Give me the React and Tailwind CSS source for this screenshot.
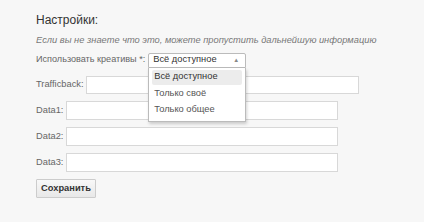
export default function App() {
  const font = { fontFamily: '"Liberation Sans", Arial, sans-serif' };

  return (
    <div className="w-[424px] h-[222px] bg-[#f7f7f7] overflow-hidden" style={font}>
      <div className="pl-[36px] pt-[12px]">
        <h2 className="text-[12px] leading-[16px] text-[#333]">Настройки:</h2>

        <p className="mt-[5px] text-[9.3px] leading-[14px] italic text-[#777]">
          Если вы не знаете что это, можете пропустить дальнейшую информацию
        </p>

        {/* creatives select */}
        <div className="mt-[6px] flex items-center h-[14px] text-[9.1px] text-[#666]">
          <span>Использовать креативы *:</span>
          <div className="relative ml-[3px] z-10 text-[9.3px]">
            <div className="w-[98px] h-[15px] border border-[#bbb] bg-white rounded-t-[2px] flex items-center justify-between pl-[4px] pr-[6px] text-[#333]">
              <span>Всё доступное</span>
              <span className="text-[6px] text-[#888]">▲</span>
            </div>
            <div className="absolute left-0 top-[15px] w-[98px] bg-white border border-t-0 border-[#bbb] shadow-[1px_2px_3px_rgba(0,0,0,0.18)] px-[3px] pt-[2px] pb-[3px] text-[#555]">
              <div className="h-[15px] flex items-center pl-[2px] bg-[#ececec] rounded-[2px] text-[#333]">Всё доступное</div>
              <div className="h-[16px] mt-[1px] flex items-center pl-[2px]">Только своё</div>
              <div className="h-[16px] flex items-center pl-[2px]">Только общее</div>
            </div>
          </div>
        </div>

        {/* trafficback */}
        <div className="mt-[9px] flex items-center text-[9.3px] text-[#666]">
          <span>Trafficback:</span>
          <div className="ml-[2px] w-[273px] h-[18px] bg-white border border-[#d8d8d8]" />
        </div>

        {["Data1:", "Data2:", "Data3:"].map((l) => (
          <div key={l} className="mt-[7px] flex items-center text-[9.3px] text-[#666]">
            <span className="w-[28px]">{l}</span>
            <div className="ml-[2px] w-[272px] h-[19px] bg-white border border-[#d8d8d8]" />
          </div>
        ))}

        <button className="mt-[7px] w-[60px] h-[19px] border border-[#ccc] bg-gradient-to-b from-[#f8f8f8] to-[#e8e8e8] text-[9.3px] font-semibold text-[#333] rounded-[1px]">
          Сохранить
        </button>
      </div>
    </div>
  );
}
